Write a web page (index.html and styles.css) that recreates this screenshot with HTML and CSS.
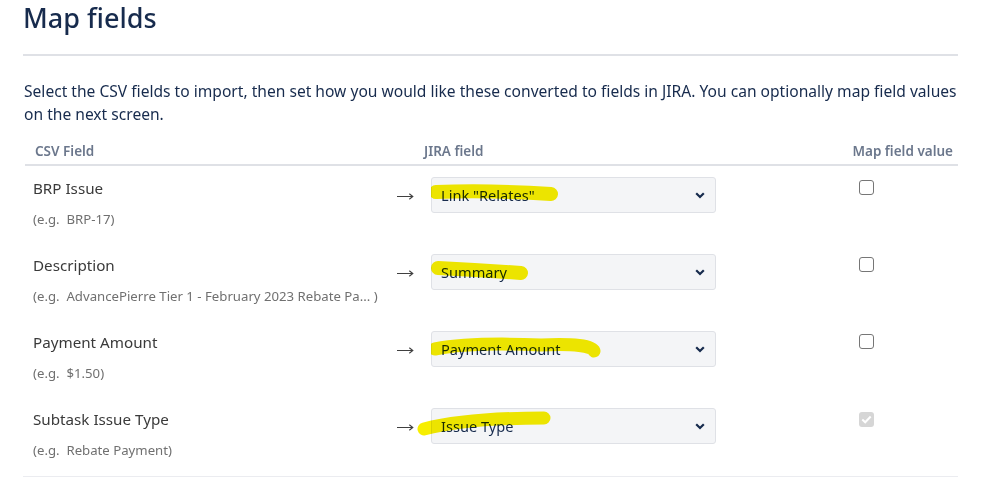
FILE: index.html
```html
<!DOCTYPE html>
<html lang="en">
<head>
<meta charset="utf-8">
<title>Map fields</title>
<link rel="stylesheet" href="styles.css">
</head>
<body>
<div class="page">
  <header class="page-header">
    <h1 class="title">Map fields</h1>
  </header>
  <p class="intro">Select the CSV fields to import, then set how you would like these converted to fields in JIRA. You can optionally map field values on the next screen.</p>

  <div class="table">
    <div class="row head">
      <div class="cell csv">CSV Field</div>
      <div class="cell arrow"></div>
      <div class="cell jira">JIRA field</div>
      <div class="cell map">Map field value</div>
    </div>

    <div class="row">
      <div class="cell csv">
        <div class="label">BRP Issue</div>
        <div class="hint">(e.g.&nbsp; BRP-17)</div>
      </div>
      <div class="cell arrow"><svg class="arr" width="17" height="7" viewBox="0 0 17 7"><path d="M0 3.5 H15.5 M12.3 0.8 L15.8 3.5 L12.3 6.2" fill="none" stroke="#404040" stroke-width="1.1"/></svg></div>
      <div class="cell jira">
        <div class="select-wrap">
          <select class="select"><option>Link "Relates"</option></select>
          <svg class="chev" width="10" height="7" viewBox="0 0 10 7"><path d="M1.2 1.2 L5 5 L8.8 1.2" fill="none" stroke="#172b4d" stroke-width="2.2"/></svg>
          <svg class="hl" width="140" height="36" viewBox="0 0 140 36"><path d="M5 15 Q 60 13 120 17" fill="none" stroke="#f7ee00" stroke-width="14" stroke-linecap="round"/></svg>
        </div>
      </div>
      <div class="cell map"><span class="cb"></span></div>
    </div>

    <div class="row">
      <div class="cell csv">
        <div class="label">Description</div>
        <div class="hint">(e.g.&nbsp; AdvancePierre Tier 1 - February 2023 Rebate Pa... )</div>
      </div>
      <div class="cell arrow"><svg class="arr" width="17" height="7" viewBox="0 0 17 7"><path d="M0 3.5 H15.5 M12.3 0.8 L15.8 3.5 L12.3 6.2" fill="none" stroke="#404040" stroke-width="1.1"/></svg></div>
      <div class="cell jira">
        <div class="select-wrap">
          <select class="select"><option>Summary</option></select>
          <svg class="chev" width="10" height="7" viewBox="0 0 10 7"><path d="M1.2 1.2 L5 5 L8.8 1.2" fill="none" stroke="#172b4d" stroke-width="2.2"/></svg>
          <svg class="hl" width="140" height="36" viewBox="0 0 140 36"><path d="M7 14 Q 50 16 90 19" fill="none" stroke="#f7ee00" stroke-width="14" stroke-linecap="round"/></svg>
        </div>
      </div>
      <div class="cell map"><span class="cb"></span></div>
    </div>

    <div class="row">
      <div class="cell csv">
        <div class="label">Payment Amount</div>
        <div class="hint">(e.g.&nbsp; $1.50)</div>
      </div>
      <div class="cell arrow"><svg class="arr" width="17" height="7" viewBox="0 0 17 7"><path d="M0 3.5 H15.5 M12.3 0.8 L15.8 3.5 L12.3 6.2" fill="none" stroke="#404040" stroke-width="1.1"/></svg></div>
      <div class="cell jira">
        <div class="select-wrap">
          <select class="select"><option>Payment Amount</option></select>
          <svg class="chev" width="10" height="7" viewBox="0 0 10 7"><path d="M1.2 1.2 L5 5 L8.8 1.2" fill="none" stroke="#172b4d" stroke-width="2.2"/></svg>
          <svg class="hl" width="180" height="36" viewBox="0 0 180 36"><path d="M4 18 Q 40 11 110 14 Q 160 12 163 20" fill="none" stroke="#f7ee00" stroke-width="13" stroke-linecap="round"/></svg>
        </div>
      </div>
      <div class="cell map"><span class="cb"></span></div>
    </div>

    <div class="row">
      <div class="cell csv">
        <div class="label">Subtask Issue Type</div>
        <div class="hint">(e.g.&nbsp; Rebate Payment)</div>
      </div>
      <div class="cell arrow"><svg class="arr" width="17" height="7" viewBox="0 0 17 7"><path d="M0 3.5 H15.5 M12.3 0.8 L15.8 3.5 L12.3 6.2" fill="none" stroke="#404040" stroke-width="1.1"/></svg></div>
      <div class="cell jira">
        <div class="select-wrap">
          <select class="select"><option>Issue Type</option></select>
          <svg class="chev" width="10" height="7" viewBox="0 0 10 7"><path d="M1.2 1.2 L5 5 L8.8 1.2" fill="none" stroke="#172b4d" stroke-width="2.2"/></svg>
          <svg class="hl hl-left" width="160" height="36" viewBox="0 0 160 36"><path d="M7 21 Q 50 10 127 10" fill="none" stroke="#f7ee00" stroke-width="13" stroke-linecap="round"/></svg>
        </div>
      </div>
      <div class="cell map"><span class="cb cb-checked"><svg width="11" height="9" viewBox="0 0 11 9"><path d="M1.3 4.6 L4.2 7.3 L9.7 1.5" fill="none" stroke="#fff" stroke-width="2"/></svg></span></div>
    </div>
  </div>
</div>
</body>
</html>
```

FILE: styles.css
```css
html, body {
  margin: 0;
  padding: 0;
  background: #fff;
}

body {
  font-family: "Noto Sans", "Open Sans", sans-serif;
  color: #172b4d;
  font-size: 14px;
}

.page {
  width: 935px;
  padding-left: 23px;
}

.page-header {
  border-bottom: 2px solid #dfe1e6;
  height: 54px;
}

.title {
  margin: 0;
  padding-top: 1px;
  font-size: 27px;
  font-weight: 500;
  line-height: 34px;
  color: #172b4d;
}

.intro {
  margin: 24px 0 0 1px;
  line-height: 23px;
  font-size: 15.6px;
  color: #172b4d;
}

.table {
  margin-top: 14px;
  padding-bottom: 2px;
  border-bottom: 1px solid #ebecf0;
}

.row {
  display: grid;
  grid-template-columns: 364px 37px 424px 110px;
  padding: 11px 0 0;
  height: 66px;
}

.row.head {
  height: 24px;
  padding: 0;
  margin-left: 2px;
  border-bottom: 2px solid #dfe1e6;
  color: #6b778c;
  font-weight: 600;
  font-size: 13.5px;
  line-height: 22px;
  grid-template-columns: 362px 37px 424px 110px;
  white-space: nowrap;
}

.row.head .map {
  text-align: right;
  padding: 0 5px 0 0;
}

.cell.csv {
  padding-left: 10px;
}

.label {
  font-size: 15.2px;
  line-height: 22px;
  color: #3a3a3a;
}

.hint {
  margin-top: 11px;
  font-size: 13.2px;
  line-height: 18px;
  color: #707070;
  white-space: nowrap;
}

.cell.arrow {
  padding-left: 10px;
  padding-top: 16px;
}

.arr {
  display: block;
}

.select-wrap {
  position: relative;
  margin-left: 7px;
  width: 285px;
  height: 36px;
}

.select {
  appearance: none;
  -webkit-appearance: none;
  width: 285px;
  height: 36px;
  box-sizing: border-box;
  border: 1px solid #dfe1e6;
  border-radius: 3px;
  background: #f4f5f7;
  font-family: "Noto Sans", "Open Sans", sans-serif;
  font-size: 14.6px;
  color: #172b4d;
  padding: 0 0 0 9px;
  margin: 0;
}

.chev {
  position: absolute;
  right: 11px;
  top: 15px;
}

.hl {
  position: absolute;
  left: 0;
  top: 0;
  mix-blend-mode: multiply;
  pointer-events: none;
}

.hl-left {
  left: -14px;
}

.cell.map {
  padding-left: 11px;
  padding-top: 3px;
}

.cb {
  display: inline-block;
  box-sizing: border-box;
  width: 15px;
  height: 15px;
  border: 1.5px solid #767676;
  border-radius: 3px;
  background: #fff;
  vertical-align: top;
}

.cb-checked {
  border: none;
  background: #d6d6d6;
  display: inline-flex;
  align-items: center;
  justify-content: center;
  margin-top: 1px;
}
```
